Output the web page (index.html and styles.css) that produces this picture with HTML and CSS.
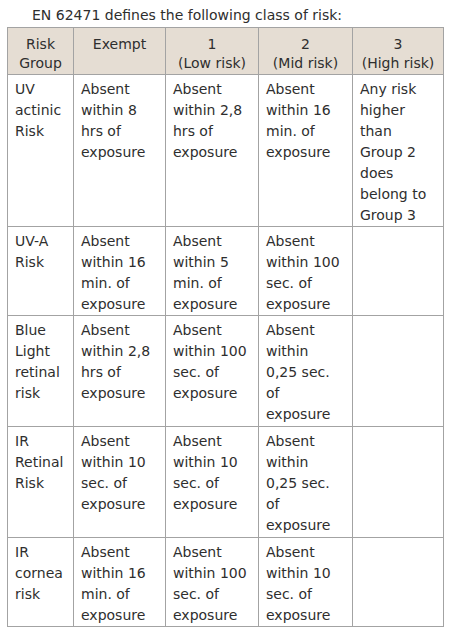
FILE: index.html
```html
<!DOCTYPE html>
<html lang="en">
<head>
<meta charset="utf-8">
<title>EN 62471 risk classes</title>
<link rel="stylesheet" href="styles.css">
</head>
<body>
<p class="intro">EN 62471 defines the following class of risk:</p>
<div class="risk-table" role="table">
  <div class="cell head" role="columnheader">Risk<br>Group</div>
  <div class="cell head" role="columnheader">Exempt</div>
  <div class="cell head" role="columnheader">1<br>(Low risk)</div>
  <div class="cell head" role="columnheader">2<br>(Mid risk)</div>
  <div class="cell head" role="columnheader">3<br>(High risk)</div>

  <div class="cell" role="cell">UV<br>actinic<br>Risk</div>
  <div class="cell" role="cell">Absent<br>within 8<br>hrs of<br>exposure</div>
  <div class="cell" role="cell">Absent<br>within 2,8<br>hrs of<br>exposure</div>
  <div class="cell" role="cell">Absent<br>within 16<br>min. of<br>exposure</div>
  <div class="cell" role="cell">Any risk<br>higher<br>than<br>Group 2<br>does<br>belong to<br>Group 3</div>

  <div class="cell" role="cell">UV-A<br>Risk</div>
  <div class="cell" role="cell">Absent<br>within 16<br>min. of<br>exposure</div>
  <div class="cell" role="cell">Absent<br>within 5<br>min. of<br>exposure</div>
  <div class="cell" role="cell">Absent<br>within 100<br>sec. of<br>exposure</div>
  <div class="cell" role="cell"></div>

  <div class="cell tall" role="cell">Blue<br>Light<br>retinal<br>risk</div>
  <div class="cell tall" role="cell">Absent<br>within 2,8<br>hrs of<br>exposure</div>
  <div class="cell tall" role="cell">Absent<br>within 100<br>sec. of<br>exposure</div>
  <div class="cell tall" role="cell">Absent<br>within<br>0,25 sec.<br>of<br>exposure</div>
  <div class="cell tall" role="cell"></div>

  <div class="cell tall" role="cell">IR<br>Retinal<br>Risk</div>
  <div class="cell tall" role="cell">Absent<br>within 10<br>sec. of<br>exposure</div>
  <div class="cell tall" role="cell">Absent<br>within 10<br>sec. of<br>exposure</div>
  <div class="cell tall" role="cell">Absent<br>within<br>0,25 sec.<br>of<br>exposure</div>
  <div class="cell tall" role="cell"></div>

  <div class="cell" role="cell">IR<br>cornea<br>risk</div>
  <div class="cell" role="cell">Absent<br>within 16<br>min. of<br>exposure</div>
  <div class="cell" role="cell">Absent<br>within 100<br>sec. of<br>exposure</div>
  <div class="cell" role="cell">Absent<br>within 10<br>sec. of<br>exposure</div>
  <div class="cell" role="cell"></div>
</div>
</body>
</html>
```

FILE: styles.css
```css
html, body {
  margin: 0;
  padding: 0;
  background: #ffffff;
}

body {
  font-family: "DejaVu Sans", "Liberation Sans", sans-serif;
  font-size: 14px;
  color: #2e2e2e;
}

.intro {
  margin: 0;
  padding: 5px 0 0 32px;
  line-height: 21px;
  height: 21px;
}

.risk-table {
  margin: 1px 0 0 7px;
  width: 437px;
  box-sizing: border-box;
  display: grid;
  grid-template-columns: 65px 91px 92px 93px 90px;
  gap: 1px;
  padding: 1px;
  background: #a3a3a3;
}

.cell {
  background: #ffffff;
  line-height: 21px;
  padding: 4px 2px 0 7px;
  white-space: nowrap;
}

.cell.tall {
  padding-bottom: 1px;
}

.cell.head {
  background: #e5ddd3;
  text-align: center;
  line-height: 19px;
  padding: 7px 1px 1px 1px;
}
```
